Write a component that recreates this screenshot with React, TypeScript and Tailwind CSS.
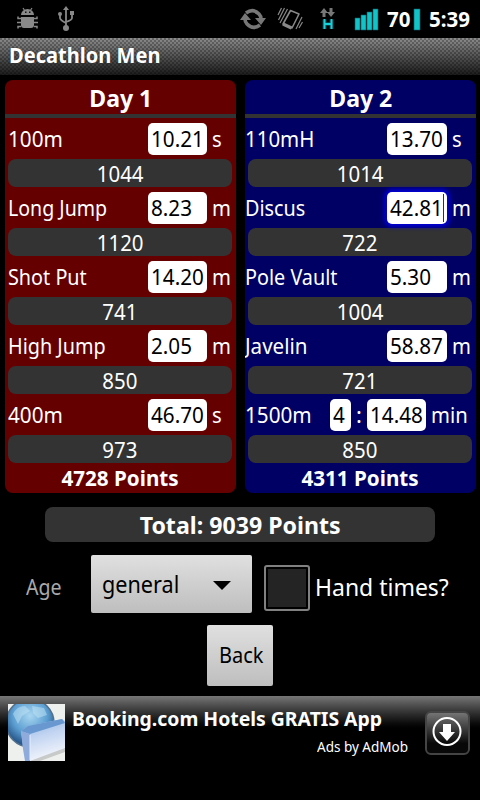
import React from "react";

type Row = { name: string; nameCls: string; value: string; unit: string; score: string; minutes?: string; focus?: boolean };

const day1: Row[] = [
  { name: "100m", nameCls: "scale-x-[.94]", value: "10.21", unit: "s", score: "1044" },
  { name: "Long Jump", nameCls: "scale-x-[.89]", value: "8.23", unit: "m", score: "1120" },
  { name: "Shot Put", nameCls: "scale-x-[.90]", value: "14.20", unit: "m", score: "741" },
  { name: "High Jump", nameCls: "scale-x-[.90]", value: "2.05", unit: "m", score: "850" },
  { name: "400m", nameCls: "scale-x-[.94]", value: "46.70", unit: "s", score: "973" },
];
const day2: Row[] = [
  { name: "110mH", nameCls: "scale-x-[.93]", value: "13.70", unit: "s", score: "1014" },
  { name: "Discus", nameCls: "scale-x-[.90]", value: "42.81", unit: "m", score: "722", focus: true },
  { name: "Pole Vault", nameCls: "scale-x-[.90]", value: "5.30", unit: "m", score: "1004" },
  { name: "Javelin", nameCls: "scale-x-[.935]", value: "58.87", unit: "m", score: "721" },
  { name: "1500m", nameCls: "scale-x-[.94]", value: "14.48", unit: "min", score: "850", minutes: "4" },
];

function EventRow({ r, second }: { r: Row; second?: boolean }) {
  return (
    <div className="h-[69px]">
      <div className="flex h-8 items-start text-[22px] leading-[30px]">
        <span className={`${second ? "ml-0" : "ml-[3px]"} block shrink-0 origin-left ${r.nameCls} ${r.minutes ? "w-[85px]" : second ? "w-[142px]" : "w-[140px]"}`}>{r.name}</span>
        {r.minutes && (
          <>
            <span className="h-8 w-[21px] shrink-0 rounded-[5px] bg-white pl-[3px] text-black"><span className="block origin-left scale-x-[.94]">{r.minutes}</span></span>
            <span className="w-4 shrink-0 text-center">:</span>
          </>
        )}
        <span className={`relative h-8 shrink-0 rounded-[5px] bg-white pl-[3px] text-black ${second && !r.minutes ? "w-[60px]" : "w-[59px]"} ${r.focus ? "shadow-[0_0_4px_3px_#0000d8]" : ""}`}>
          <span className="block origin-left scale-x-[.94]">{r.value}</span>
          {r.focus && <i className="absolute top-[2px] right-[3px] h-7 w-px bg-[#333]" />}
        </span>
        <span className="ml-[5px] origin-left scale-x-[.92]">{r.unit}</span>
      </div>
      <div className="mt-1 ml-[3px] h-7 w-56 rounded-[8px] bg-[#333] text-center text-[22px] leading-[29px]">
        <span className="inline-block scale-x-[.93]">{r.score}</span>
      </div>
    </div>
  );
}

function Day({ title, rows, total, second }: { title: string; rows: Row[]; total: string; second?: boolean }) {
  return (
    <section className={`h-[413px] w-[231px] overflow-hidden rounded-[8px] ${second ? "bg-[#000064]" : "bg-[#640000]"}`}>
      <h2 className="h-[34px] text-center text-[24px] leading-[35px] font-bold"><span className="inline-block scale-x-[.96]">{title}</span></h2>
      <div className="mb-[5px] h-1 bg-[#333]" />
      {rows.map((r) => <EventRow key={r.name} r={r} second={second} />)}
      <div className="-mt-[5px] text-center text-[21.5px] leading-[30px] font-bold"><span className="inline-block scale-x-[.96]">{total}</span></div>
    </section>
  );
}

export default function App() {
  return (
    <main className="flex h-[800px] w-[480px] flex-col overflow-hidden bg-black font-['Noto_Sans',sans-serif] whitespace-nowrap text-white">
      <header className="flex h-[38px] items-center">
        <svg className="shrink-0" width="480" height="38" viewBox="0 0 480 38">
          <g fill="#888" stroke="#888">
            <path d="M21 15a6.5 6 0 0 1 13 0z" stroke="none" />
            <path d="M23 8l2 3m7-3-2 3" strokeWidth="1.2" />
            <path d="M21 18.500h-3v-2m3 6h-4m4 4h-3v2M34 18.500h3v-2m-3 6h4m-4 4h3v2" fill="none" strokeWidth="1.5" />
            <path d="M21 17h13v8q0 3-3 3h-7q-3 0-3-3z" stroke="none" />
            <path d="M25 11.500h1.500v1.500H25zM29 11.500h1.500v1.500H29z" fill="#111" stroke="none" />
            <path d="M66 9v19M60 14v4q0 2 6 5m6-8v3q0 2-6 4" fill="none" strokeWidth="1.8" />
            <path d="M63 10l3-4 3 4z" stroke="none" /><circle cx="66" cy="28" r="3" stroke="none" /><circle cx="60" cy="14" r="2" stroke="none" /><path d="M70 11h4v4h-4z" stroke="none" />
          </g>
          <g fill="none" stroke="#777" strokeWidth="3.6"><path d="M246 13q7-5 13 1 2 2 2 5M260 25q-7 5-13-1-2-2-2-5" /></g>
          <path d="M255 18h11l-5 7zM240 20h11l-6-7z" fill="#777" />
          <g fill="none" stroke="#888" strokeWidth="1.2"><path d="M290.500 10.500l8.500 3.500-7 14-9-4z" strokeWidth="1.6" strokeLinejoin="round" /><path d="M283 24l8.500 4" strokeWidth="3.5" /><path d="M278 15l3.500-7M278.500 20l6-12M280 23l7.500-14M302.500 22l-3.500 6M302 17l-6 12" /></g>
          <path d="M320 13l4-5 4 5h-2.500v4h-3v-4zM327 12h2.500V8h3v4h2.500l-4 5z" fill="#777" />
          <path d="M324.500 19.500v9.500m7-9.500v9.500m-7-5h7" stroke="#087d90" strokeWidth="4" opacity=".5" fill="none" />
          <path d="M324.500 19v10m7-10v10m-7-5h7" stroke="#19cfd8" strokeWidth="2" fill="none" />
          <path d="M355 18h5v12h-5zM361 15h5v15h-5zM367 12h5v18h-5zM373 9h5v21h-5zM414 9h6v21h-6z" fill="#10c4c8" stroke="#075f68" strokeWidth=".6" />
        </svg>
        <div className="-ml-[93px] flex h-full w-[93px] shrink-0 items-center text-[20.5px] font-bold">
          <span className="w-[42px] shrink-0">70</span><span>5:39</span>
        </div>
      </header>
      <div className="h-[37px] bg-[repeating-conic-gradient(#0000_0_25%,#0004_0_50%),linear-gradient(#8c8c8c,#707070_25%,#424242_65%,#1c1c1c)] bg-[length:4px_4px,100%_100%] pl-[9px] text-[21px] leading-[35px] font-bold [text-shadow:0_0_2px_#333]">
        <span className="inline-block origin-left scale-x-[.955]">Decathlon Men</span>
      </div>
      <div className="mt-[5px] flex gap-[9px] pl-[5px]">
        <Day title="Day 1" rows={day1} total="4728 Points" />
        <Day title="Day 2" rows={day2} total="4311 Points" second />
      </div>
      <div className="mt-[14px] ml-[45px] h-[35px] w-[390px] rounded-[8px] bg-[#333] text-center text-[24px] leading-[36px] font-bold"><span className="inline-block scale-x-[.965]">Total: 9039 Points</span></div>
      <div className="mt-[13px] flex h-[58px]">
        <span className="ml-[26px] w-[65px] shrink-0 origin-left scale-x-[.89] text-[22px] leading-[62px] text-[#aaa]">Age</span>
        <div className="flex w-[161px] shrink-0 items-center rounded-[2px] bg-linear-to-b from-[#e0e0e0] to-[#bebebe] pl-[11px] text-[23.5px] text-black">
          <span className="w-[111px] origin-left scale-x-[.92] pt-[2px]">general</span>
          <svg className="mt-[2px]" width="18" height="9" viewBox="0 0 18 9"><path d="M0 0h18L9 9z" /></svg>
        </div>
        <div className="mt-[10px] ml-3 h-[46px] w-[46px] shrink-0 rounded-[3px] border-2 border-[#808080] p-[2px]"><div className="h-full bg-[#242424]" /></div>
        <span className="ml-[5px] origin-left scale-x-[.957] text-[24px] leading-[64px]">Hand times?</span>
      </div>
      <button className="mt-3 ml-[207px] h-[61px] w-[66px] shrink-0 rounded-[2px] bg-linear-to-b from-[#e0e0e0] to-[#bebebe] pb-[2px] pl-3 text-left text-[22px] text-black"><span className="inline-block origin-left scale-x-[.91]">Back</span></button>
      <footer className="mt-[10px] flex h-[104px] bg-linear-to-b from-[#777] to-black to-[36%]">
        <svg className="mt-2 ml-2 shrink-0" width="57" height="57" viewBox="0 0 57 57">
          <defs>
            <radialGradient id="globe" cx=".5" cy=".35" r=".6"><stop stopColor="#a8d6f0" /><stop offset=".6" stopColor="#5d9fd2" /><stop offset="1" stopColor="#28588c" /></radialGradient>
            <linearGradient id="bag" x2=".3" y2="1"><stop stopColor="#88b0e2" /><stop offset=".5" stopColor="#c3d5f2" /><stop offset="1" stopColor="#f0f3fb" /></linearGradient>
          </defs>
          <path fill="#eef0ed" d="M0 0h57v57H0z" />
          <circle cx="22" cy="19" r="24" fill="url(#globe)" stroke="#54718c" strokeWidth="1.5" />
          <path d="M5 10q4-8 12-8l5 5-8 5-4 8zM24 2l12 2 3 7-9 3-5-5z" fill="#c4e5f5" opacity=".5" />
          <path d="M20 57 57 43v5L32 57z" fill="#c7cac9" />
          <path d="M13 27 20 22 54 15l3 2v27L22 57h-5z" fill="url(#bag)" />
          <path d="M13 27 22 30v27h-5l-2-12z" fill="#8eabdc" />
          <path d="M13 27 20 22 54 15l3 4L22 30z" fill="#6898cf" />
          <path d="M22 31v25" stroke="#e8effb" />
        </svg>
        <div className="ml-[7px] w-[353px] shrink-0">
          <div className="mt-[9px] origin-left text-[19.4px] leading-[28px] font-bold">Booking.com Hotels GRATIS App</div>
          <div className="mt-[3px] ml-[245px] origin-left scale-x-[.965] text-[14px] leading-[22px]">Ads by AdMob</div>
        </div>
        <svg className="mt-[13px]" width="46" height="46" viewBox="0 0 46 46">
          <defs><linearGradient id="download" x2="0" y2="1"><stop stopColor="#777" /><stop offset=".75" stopColor="#080808" /></linearGradient></defs>
          <rect x="1" y="3" width="43" height="42" rx="5" fill="url(#download)" stroke="#444" strokeWidth="2" /><circle cx="22" cy="22.500" r="13.500" stroke="white" strokeWidth="2" fill="none" /><path d="M18 15h8v8h4l-8 9-8-9h4z" fill="white" />
        </svg>
      </footer>
    </main>
  );
}
